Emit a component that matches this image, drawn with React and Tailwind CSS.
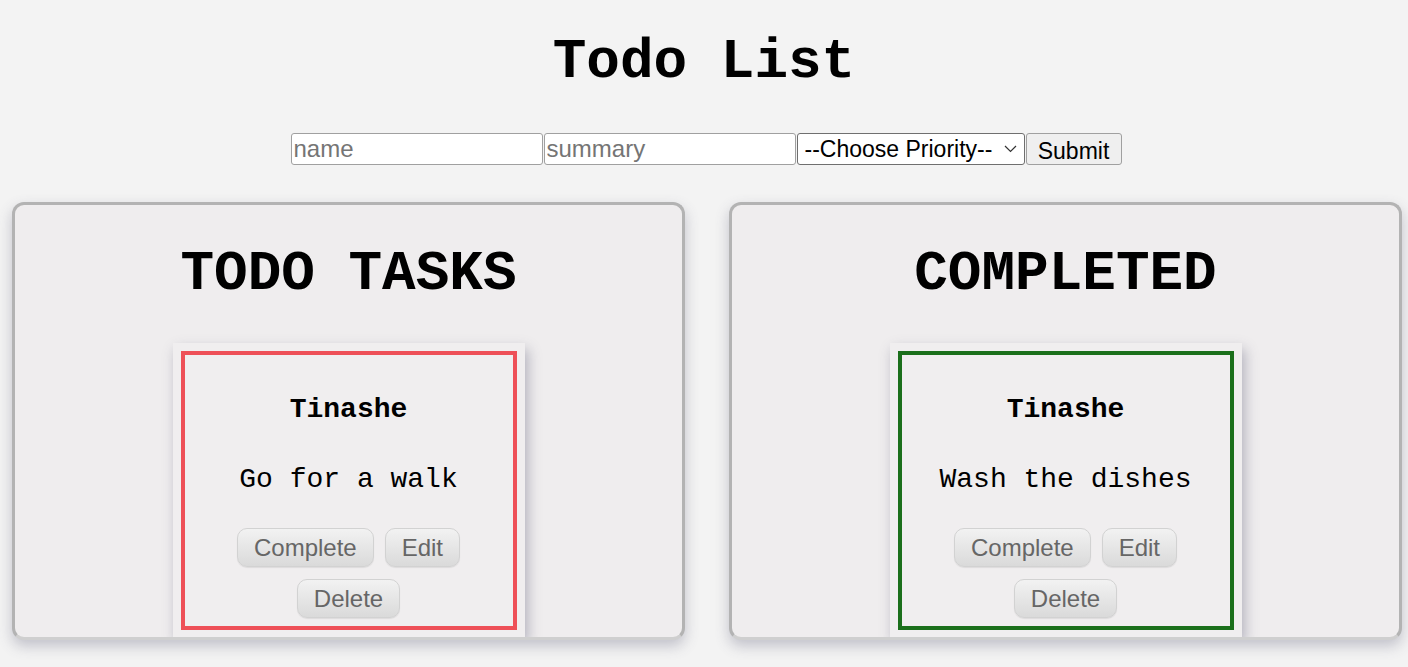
import React from 'react';

const mono = "font-['Liberation_Mono','Courier_New',monospace]";
const sans = "font-['Liberation_Sans',Arial,sans-serif]";

const tasks = [
  { name: 'Tinashe', summary: 'Go for a walk', done: false },
  { name: 'Tinashe', summary: 'Wash the dishes', done: true },
];

const CardButton = ({ children, className = '' }) => (
  <button
    className={`h-[39px] px-[16px] rounded-[10px] border border-[#d2d2d2] bg-gradient-to-b from-[#f2f2f2] to-[#dadada] text-[24px] text-[#666] shadow-[0_1px_1px_rgba(0,0,0,0.08)] ${sans} ${className}`}
  >
    {children}
  </button>
);

const TaskCard = ({ task }) => (
  <div className="bg-[#f0eeef] p-[8px] w-[352px] shadow-[3px_6px_12px_rgba(70,70,100,0.35)]">
    <div
      className={`border-4 ${task.done ? 'border-[#1b6f1b]' : 'border-[#ee5058]'} flex flex-col items-center pt-[39px] pb-[8px]`}
    >
      <div className={`${mono} font-bold text-[28px] leading-[32px] text-black`}>{task.name}</div>
      <div className={`${mono} text-[28px] leading-[32px] text-black mt-[38px]`}>{task.summary}</div>
      <div className="flex flex-wrap justify-center gap-x-[11px] gap-y-[12px] mt-[32px] w-[250px]">
        <CardButton>Complete</CardButton>
        <CardButton>Edit</CardButton>
        <CardButton>Delete</CardButton>
      </div>
    </div>
  </div>
);

const Panel = ({ title, task }) => (
  <div className="w-[673px] h-[438px] rounded-[12px] border-[3px] border-[#b3b3b3] border-b-[#cfcfcf] bg-[#efedee] shadow-[0_6px_14px_rgba(80,80,110,0.3)] overflow-hidden flex flex-col items-center">
    <h2 className={`${mono} font-bold text-[56px] leading-[64px] text-black mt-[37px]`}>{title}</h2>
    <div className="mt-[37px]">
      <TaskCard task={task} />
    </div>
  </div>
);

export default function App() {
  return (
    <div className="min-h-[667px] bg-[#f3f3f3] pt-[30px] overflow-hidden">
      <h1 className={`${mono} font-bold text-[56px] leading-[64px] text-black text-center`}>Todo List</h1>

      {/* form row */}
      <div className={`flex justify-center mt-[39px] pl-[4px] ${sans} text-[24px]`}>
        <input
          placeholder="name"
          className="w-[252px] h-[32px] px-[2px] bg-white border border-[#a0a0a0] rounded-[3px] placeholder:text-[#757575] outline-none"
        />
        <input
          placeholder="summary"
          className="w-[252px] h-[32px] px-[2px] ml-[1px] bg-white border border-[#a0a0a0] rounded-[3px] placeholder:text-[#757575] outline-none"
        />
        <div className="relative w-[228px] h-[32px] ml-[1px] bg-white border border-[#6f6f6f] rounded-[3px] flex items-center pl-[7px] text-black text-[23px]">
          --Choose Priority--
          <svg className="absolute right-[7px] top-[11px]" width="13" height="8" viewBox="0 0 13 8" fill="none">
            <path d="M1 1l5.5 5.5L12 1" stroke="#333" strokeWidth="1.2" />
          </svg>
        </div>
        <button className="w-[96px] h-[32px] ml-[1px] bg-[#efefef] border border-[#a0a0a0] rounded-[3px] text-black text-[23px]">
          Submit
        </button>
      </div>

      <div className="flex pl-[12px] gap-[44px] mt-[37px]">
        <Panel title="TODO TASKS" task={tasks[0]} />
        <Panel title="COMPLETED" task={tasks[1]} />
      </div>
    </div>
  );
}
